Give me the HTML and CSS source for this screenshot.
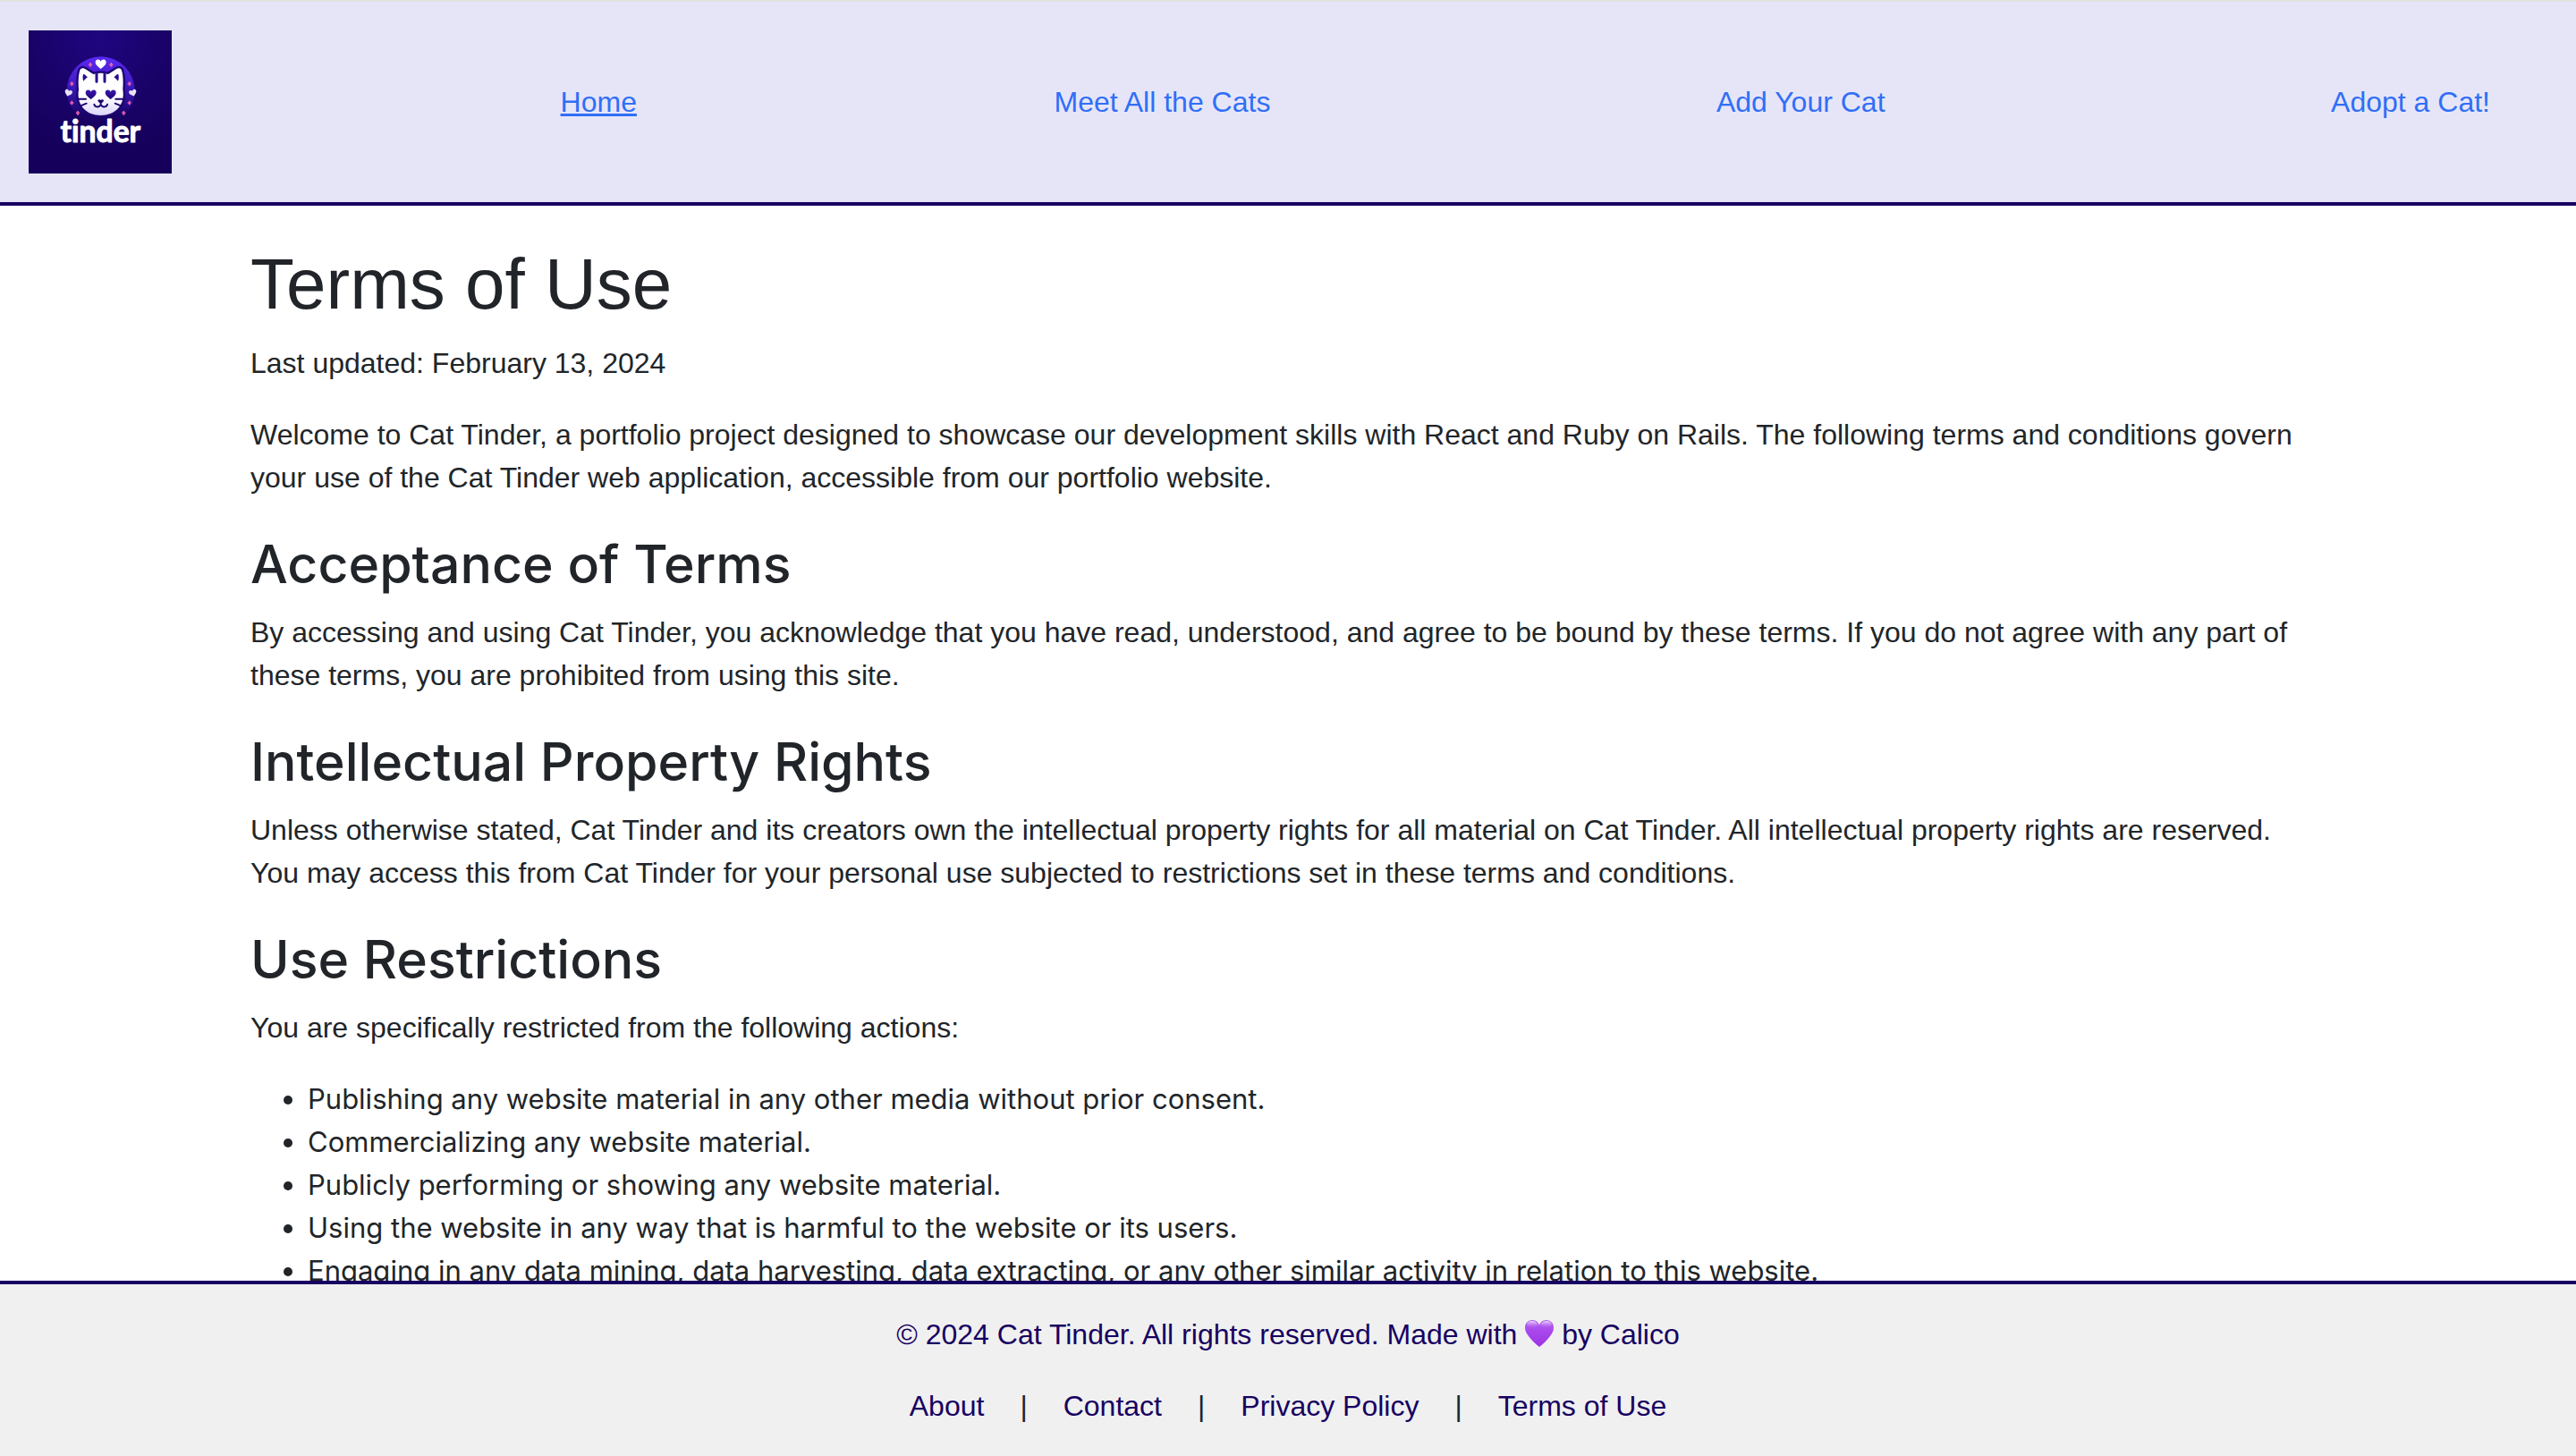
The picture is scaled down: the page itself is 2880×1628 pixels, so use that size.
FILE: index.html
```html
<!DOCTYPE html>
<html lang="en">
<head>
  <meta charset="utf-8">
  <meta name="viewport" content="width=device-width, initial-scale=1">
  <title>Cat Tinder - Terms of Use</title>
  <link rel="stylesheet" href="styles.css">
</head>
<body>
  <header class="site-header">
    <a class="logo" href="#" aria-label="Cat Tinder">
      <svg class="logo-image" viewBox="96 102 480 480" aria-hidden="true">
        <defs>
          <radialGradient id="night" cx="50%" cy="5%" r="85%">
            <stop offset="0" stop-color="#1f0580"/>
            <stop offset="0.6" stop-color="#190266"/>
            <stop offset="1" stop-color="#15005b"/>
          </radialGradient>
          <linearGradient id="halo" x1="0" y1="0" x2="0" y2="1">
            <stop offset="0" stop-color="#5a29f2"/>
            <stop offset="0.4" stop-color="#411bc4"/>
            <stop offset="0.85" stop-color="#1a0468"/>
            <stop offset="1" stop-color="#17015f"/>
          </linearGradient>
          <linearGradient id="fur" x1="0" y1="0" x2="0" y2="1">
            <stop offset="0.6" stop-color="#ffffff"/>
            <stop offset="1" stop-color="#dcd6fa"/>
          </linearGradient>
          <linearGradient id="eye" x1="0" y1="0" x2="0" y2="1">
            <stop offset="0" stop-color="#3d17b4"/>
            <stop offset="1" stop-color="#1d0570"/>
          </linearGradient>
          <path id="heart" d="M0 16C-8 9-18 2-18-6C-18-18-4-19 0-9C4-19 18-18 18-6C18 2 8 9 0 16Z"/>
          <path id="spark" d="M0-7V7M-6 0H6"/>
        </defs>
        <rect x="96" y="102" width="480" height="480" fill="url(#night)"/>
        <circle cx="338" cy="304" r="114" fill="url(#halo)"/>
        <path d="M264 300C262 275 263 250 268 236C272 226 281 228 290 234L313 249Q338 242 363 249L386 234C395 228 404 226 408 236C413 250 414 275 412 300C421 354 385 387 338 387C291 387 255 354 264 300Z" fill="url(#fur)" stroke="#1c046f" stroke-width="14" paint-order="stroke"/>
        <path d="M279 250C281 246 287 252 294 259C288 263 284 268 280 272C277 266 277 256 279 250ZM397 250C395 246 389 252 382 259C388 263 392 268 396 272C399 266 399 256 397 250Z" fill="#2a0b8a"/>
        <path d="M324 246V274M351 246V274" stroke="#2a0b8a" stroke-width="9" stroke-linecap="round"/>
        <use href="#heart" x="305" y="317" fill="url(#eye)"/>
        <use href="#heart" x="371" y="317" fill="url(#eye)"/>
        <path d="M338 348C333 344 327 340 328 337C330 332 336 333 338 336C340 333 346 332 348 337C349 340 343 344 338 348Z" fill="#1d0570"/>
        <path d="M338 346V352M316 350C318 361 334 361 338 351C342 361 358 361 360 350M262 332H288M270 355L290 347M388 332H414M406 355L386 347" fill="none" stroke="#1d0570" stroke-width="6" stroke-linecap="round"/>
        <use href="#heart" x="338" y="215" fill="#ffffff"/>
        <g fill="#e9e3f5">
          <use href="#heart" transform="translate(229 312) rotate(18) scale(.7)"/>
          <use href="#heart" transform="translate(446 312) rotate(-18) scale(.7)"/>
        </g>
        <g stroke="#ef62b0" stroke-width="5">
          <use href="#spark" x="303" y="217"/>
          <use href="#spark" x="373" y="217"/>
          <use href="#spark" x="241" y="281"/>
          <use href="#spark" x="434" y="281"/>
          <use href="#spark" x="241" y="345"/>
          <use href="#spark" x="434" y="345"/>
          <use href="#spark" x="261" y="379"/>
          <use href="#spark" x="415" y="379"/>
        </g>
        <text class="logo-text" x="337" y="477">tinder</text>
      </svg>
    </a>
    <a class="nav-home" href="#">Home</a>
    <a class="nav-link" href="#">Meet All the Cats</a>
    <a class="nav-link" href="#">Add Your Cat</a>
    <a class="nav-link" href="#">Adopt a Cat!</a>
  </header>

  <main class="page">
    <div class="container">
      <h1>Terms of Use</h1>
      <p>Last updated: February 13, 2024</p>
      <p>Welcome to Cat Tinder, a portfolio project designed to showcase our development skills with React and Ruby on Rails. The following terms and conditions govern your use of the Cat Tinder web application, accessible from our portfolio website.</p>

      <h2>Acceptance of Terms</h2>
      <p>By accessing and using Cat Tinder, you acknowledge that you have read, understood, and agree to be bound by these terms. If you do not agree with any part of these terms, you are prohibited from using this site.</p>

      <h2>Intellectual Property Rights</h2>
      <p>Unless otherwise stated, Cat Tinder and its creators own the intellectual property rights for all material on Cat Tinder. All intellectual property rights are reserved. You may access this from Cat Tinder for your personal use subjected to restrictions set in these terms and conditions.</p>

      <h2>Use Restrictions</h2>
      <p>You are specifically restricted from the following actions:</p>
      <ul>
        <li>Publishing any website material in any other media without prior consent.</li>
        <li>Commercializing any website material.</li>
        <li>Publicly performing or showing any website material.</li>
        <li>Using the website in any way that is harmful to the website or its users.</li>
        <li>Engaging in any data mining, data harvesting, data extracting, or any other similar activity in relation to this website.</li>
      </ul>
    </div>
  </main>

  <footer class="site-footer">
    <p class="copyright">© 2024 Cat Tinder. All rights reserved. Made with
      <svg class="love" viewBox="0 0 32 30" role="img" aria-label="love">
        <defs>
          <linearGradient id="violet" x1="0" y1="0" x2="0" y2="1">
            <stop offset="0" stop-color="#b568f0"/>
            <stop offset="0.4" stop-color="#a948ec"/>
            <stop offset="1" stop-color="#9c34e2"/>
          </linearGradient>
          <linearGradient id="shine" x1="0" y1="0" x2="0" y2="1">
            <stop offset="0" stop-color="#ecd4ff"/>
            <stop offset="1" stop-color="#b868f4" stop-opacity="0"/>
          </linearGradient>
        </defs>
        <path d="M16 30C12 27 7 22 4 18C1 14 0 12 0 8C0 3 4 0 8 0C12 0 15 2 16 6C17 2 20 0 24 0C28 0 32 3 32 8C32 12 31 14 28 18C25 22 20 27 16 30Z" fill="url(#violet)"/>
        <ellipse cx="8" cy="5" rx="6" ry="4" fill="url(#shine)"/>
        <ellipse cx="24" cy="5" rx="6" ry="4" fill="url(#shine)"/>
      </svg>
      by Calico</p>
    <nav class="footer-nav" aria-label="Footer">
      <a href="#">About</a>
      <span>|</span>
      <a href="#">Contact</a>
      <span>|</span>
      <a href="#">Privacy Policy</a>
      <span>|</span>
      <a href="#">Terms of Use</a>
    </nav>
  </footer>
</body>
</html>
```
FILE: styles.css
```css
* {
  box-sizing: border-box;
}

body {
  display: flex;
  flex-direction: column;
  height: 100vh;
  margin: 0;
  border-top: 2px solid #dfe1df;
  background: #fff;
  color: #212529;
  font-family: "Liberation Sans", Arial, sans-serif;
  font-size: 32px;
  line-height: 48px;
}

.site-header {
  display: flex;
  flex: none;
  align-items: center;
  justify-content: space-between;
  padding: 32px 64px 32px 32px;
  border-bottom: 4px solid #170061;
  background: #e6e5f8;
}

.logo,
.logo-image {
  display: block;
  width: 160px;
  height: 160px;
}

.logo-text {
  fill: #fff;
  stroke: #fff;
  stroke-width: 3px;
  stroke-linejoin: round;
  font-family: Lato, sans-serif;
  font-size: 101px;
  font-weight: 700;
  font-variant-ligatures: none;
  text-anchor: middle;
}

.nav-home,
.nav-link {
  color: #306ff6;
}

.nav-link {
  padding: 16px 32px;
  text-decoration: none;
}

.page {
  flex: 1;
  min-height: 0;
  overflow-y: auto;
  scrollbar-width: none;
}

.container {
  max-width: 2640px;
  margin: 0 auto;
  padding: 40px 160px;
}

h1 {
  margin: 0 0 16px;
  font-size: 80px;
  font-weight: 400;
  line-height: 96px;
}

h2 {
  margin: 0 0 12px;
  font-family: Inter, sans-serif;
  font-size: 59px;
  font-weight: 500;
  line-height: 81px;
}

p {
  margin: 0 0 32px;
}

ul {
  margin: 0 0 32px;
  padding-left: 64px;
  font-family: Inter, sans-serif;
  font-size: 31px;
}

.site-footer {
  flex: none;
  padding: 32px;
  border-top: 4px solid #170061;
  background: #f0f0f0;
  text-align: center;
}

.copyright {
  color: #170061;
}

.love {
  width: 32px;
  height: 30px;
  vertical-align: -3px;
}

.footer-nav {
  display: flex;
  justify-content: center;
  gap: 40px;
}

.footer-nav a {
  color: #170061;
  text-decoration: none;
}
```
